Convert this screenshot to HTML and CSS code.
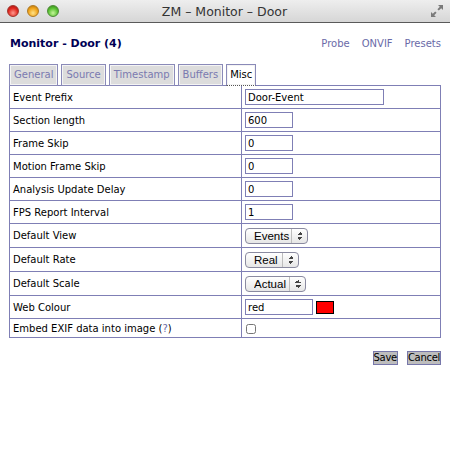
FILE: index.html
```html
<!DOCTYPE html>
<html lang="en">
<head>
  <meta charset="UTF-8">
  <title>ZM - Monitor - Door</title>
  <link rel="stylesheet" href="styles.css">
</head>
<body>
  <div class="window">
    <div class="titlebar">
      <div class="lights">
        <span class="light red"></span>
        <span class="light yellow"></span>
        <span class="light green"></span>
      </div>
      <div class="title">ZM &ndash; Monitor &ndash; Door</div>
      <svg class="resize" width="14" height="14" viewBox="0 0 14 14">
        <path d="M8 1h5v5l-1.8-1.8-2.4 2.4-1.4-1.4 2.4-2.4z" fill="#7a7a7a"/>
        <path d="M6 13H1V8l1.8 1.8 2.4-2.4 1.4 1.4-2.4 2.4z" fill="#7a7a7a"/>
      </svg>
    </div>

    <div class="content">
      <div class="header">
        <h2>Monitor - Door (4)</h2>
        <div class="links">
          <a href="#">Probe</a>
          <a href="#">ONVIF</a>
          <a href="#">Presets</a>
        </div>
      </div>

      <ul class="tabs">
        <li><a href="#">General</a></li>
        <li><a href="#">Source</a></li>
        <li><a href="#">Timestamp</a></li>
        <li><a href="#">Buffers</a></li>
        <li class="active"><a href="#">Misc</a></li>
      </ul>

      <form id="monitorForm">
        <table class="settings">
          <tr class="text-row">
            <td class="label">Event Prefix</td>
            <td><input type="text" class="wide" name="eventPrefix" value="Door-Event"></td>
          </tr>
          <tr class="text-row">
            <td class="label">Section length</td>
            <td><input type="text" class="small" name="sectionLength" value="600"></td>
          </tr>
          <tr class="text-row">
            <td class="label">Frame Skip</td>
            <td><input type="text" class="small" name="frameSkip" value="0"></td>
          </tr>
          <tr class="text-row">
            <td class="label">Motion Frame Skip</td>
            <td><input type="text" class="small" name="motionFrameSkip" value="0"></td>
          </tr>
          <tr class="text-row">
            <td class="label">Analysis Update Delay</td>
            <td><input type="text" class="small" name="analysisUpdateDelay" value="0"></td>
          </tr>
          <tr class="text-row">
            <td class="label">FPS Report Interval</td>
            <td><input type="text" class="small" name="fpsReportInterval" value="1"></td>
          </tr>
          <tr class="select-row">
            <td class="label">Default View</td>
            <td>
              <span class="select">
                <select name="defaultView" class="sel-view">
                  <option>Events</option>
                  <option>Control</option>
                </select>
              </span>
            </td>
          </tr>
          <tr class="select-row">
            <td class="label">Default Rate</td>
            <td>
              <span class="select">
                <select name="defaultRate" class="sel-rate">
                  <option>Real</option>
                </select>
              </span>
            </td>
          </tr>
          <tr class="select-row">
            <td class="label">Default Scale</td>
            <td>
              <span class="select">
                <select name="defaultScale" class="sel-scale">
                  <option>Actual</option>
                </select>
              </span>
            </td>
          </tr>
          <tr class="text-row">
            <td class="label">Web Colour</td>
            <td>
              <input type="text" class="colour" name="webColour" value="red">
              <span class="swatch"></span>
            </td>
          </tr>
          <tr class="check-row">
            <td class="label">Embed EXIF data into image (<a href="#" class="help">?</a>)</td>
            <td><input type="checkbox" name="embedExif"></td>
          </tr>
        </table>

        <div class="buttons">
          <button type="submit">Save</button>
          <button type="button">Cancel</button>
        </div>
      </form>
    </div>
  </div>
</body>
</html>
```

FILE: styles.css
```css
body {
  margin: 0;
  background: #fff;
  font-family: "DejaVu Sans", Verdana, sans-serif;
  font-size: 10px;
  color: #000;
}
.window {
  width: 450px;
  height: 463px;
  background: #fff;
}
.titlebar {
  height: 22px;
  display: flex;
  align-items: center;
  position: relative;
  background: linear-gradient(#eeeeee, #d6d6d6);
  border-bottom: 1px solid #5a5a5a;
}
.lights {
  display: flex;
  gap: 8px;
  padding-left: 7px;
}
.light {
  width: 12px;
  height: 12px;
  border-radius: 50%;
  box-sizing: border-box;
}
.light.red {
  background: radial-gradient(circle at 50% 70%, #ff9a8f, #e0281f 55%, #a3100b);
  border: 1px solid #a1342c;
}
.light.yellow {
  background: radial-gradient(circle at 50% 70%, #ffe38a, #f0a41a 55%, #b06d05);
  border: 1px solid #b07a24;
}
.light.green {
  background: radial-gradient(circle at 50% 70%, #c6f59a, #5ac233 55%, #2f7f16);
  border: 1px solid #4d8a36;
}
.title {
  flex: 1;
  text-align: center;
  margin-right: 60px;
  font-family: "DejaVu Sans", sans-serif;
  font-size: 12.5px;
  color: #333;
}
.resize {
  position: absolute;
  right: 6px;
  top: 4px;
}
.content {
  padding: 0 9px;
}
.header {
  display: flex;
  justify-content: space-between;
  align-items: center;
  height: 41px;
}
h2 {
  margin: 0;
  padding-left: 1px;
  font-size: 11px;
  font-weight: bold;
  color: #000055;
}
.links {
  display: flex;
  gap: 12px;
}
.links a {
  color: #6a6aa8;
  text-decoration: none;
}
.tabs {
  list-style: none;
  margin: 0 0 -1px 0;
  padding: 0;
  display: flex;
  gap: 3px;
  position: relative;
  z-index: 1;
}
.tabs li {
  height: 20px;
  border: 1px solid #8a8ab8;
  background: #dcdcdc;
  box-shadow: inset 0 0 0 1px #f4f4f4;
}
.tabs a {
  display: block;
  padding: 0 4px;
  line-height: 20px;
  color: #7a7ab0;
  text-decoration: none;
}
.tabs li.active {
  background: #fff;
  border-bottom: 1px dotted #555;
}
.tabs li.active a {
  padding: 0 3px;
  color: #000;
}
.settings {
  width: 100%;
  border-collapse: collapse;
  border: 1px solid #7f7fb5;
}
.settings td {
  border: 1px solid #7f7fb5;
  padding: 0 3px;
  height: 22px;
}
.settings td.label {
  width: 225px;
}
.settings .select-row td {
  height: 23px;
}
.settings .check-row td {
  height: 18px;
}
input[type="text"] {
  box-sizing: border-box;
  height: 16px;
  margin: 0;
  padding: 0 2px;
  border: 1px solid #7f7fb5;
  font-family: "DejaVu Sans", Verdana, sans-serif;
  font-size: 10px;
  vertical-align: middle;
}
input.wide {
  width: 139px;
}
input.small {
  width: 48px;
}
input.colour {
  width: 68px;
}
.swatch {
  display: inline-block;
  width: 16px;
  height: 11px;
  margin-left: 0;
  background: red;
  border: 1px solid #000;
  vertical-align: middle;
}
input[type="checkbox"] {
  width: 10px;
  height: 10px;
  margin: 0 0 0 1px;
  vertical-align: middle;
}
.help {
  color: #6a6aa8;
  text-decoration: none;
}
.select {
  display: inline-block;
  position: relative;
  vertical-align: middle;
}
.select select {
  appearance: none;
  -webkit-appearance: none;
  box-sizing: border-box;
  height: 16px;
  margin: 0;
  padding: 0 17px 0 8px;
  border: 1px solid #8a8aa0;
  border-radius: 4px;
  background: linear-gradient(#ffffff, #e6e6e6);
  font-family: "Liberation Sans", Arial, sans-serif;
  font-size: 11.5px;
  color: #000;
  display: block;
}
.sel-view {
  width: 63px;
}
.sel-rate {
  width: 54px;
}
.sel-scale {
  width: 61px;
}
.select::after {
  content: "";
  position: absolute;
  right: 0;
  top: 1px;
  bottom: 1px;
  width: 16px;
  border-left: 1px solid #bdbdbd;
  background:
    linear-gradient(to bottom right, transparent 50%, #444 50%) 5px 3px / 3px 3px no-repeat,
    linear-gradient(to bottom left, transparent 50%, #444 50%) 8px 3px / 3px 3px no-repeat,
    linear-gradient(to top right, transparent 50%, #444 50%) 5px 8px / 3px 3px no-repeat,
    linear-gradient(to top left, transparent 50%, #444 50%) 8px 8px / 3px 3px no-repeat;
  pointer-events: none;
}
.buttons {
  display: flex;
  justify-content: flex-end;
  gap: 9px;
  margin-top: 13px;
}
.buttons button {
  height: 14px;
  padding: 0;
  border: 1px solid #7777aa;
  background: #bdbdbd;
  font-family: "DejaVu Sans", Verdana, sans-serif;
  font-size: 10px;
  letter-spacing: -0.3px;
  line-height: 12px;
  color: #000;
  cursor: pointer;
}
```
